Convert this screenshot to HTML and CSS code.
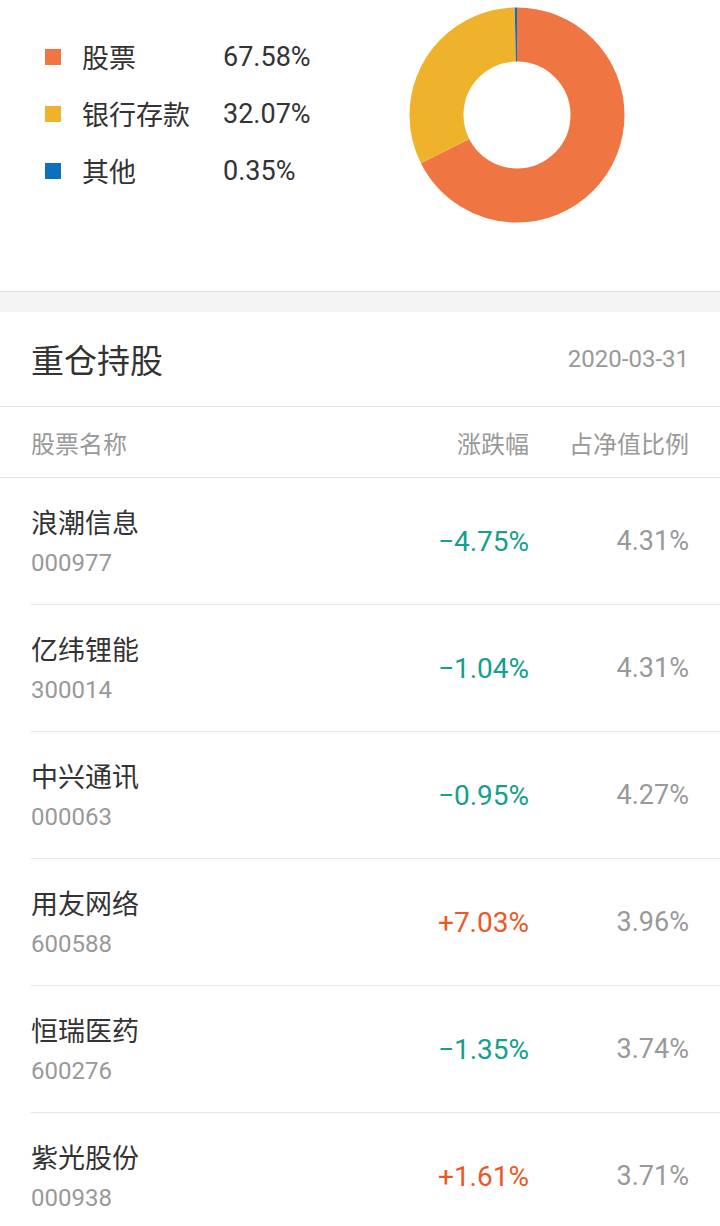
FILE: index.html
```html
<!DOCTYPE html>
<html lang="zh">
<head>
    <meta charset="UTF-8">
    <meta name="viewport" content="width=device-width, initial-scale=1.0">
    <title>基金持仓</title>
    <link rel="stylesheet" href="styles.css">
</head>
<body>
    <div class="asset">
        <div class="legend">
            <div class="legend-row">
                <span class="dot dot-stock"></span>
                <span class="legend-name">股票</span>
                <span class="legend-value">67.58%</span>
            </div>
            <div class="legend-row">
                <span class="dot dot-bank"></span>
                <span class="legend-name">银行存款</span>
                <span class="legend-value">32.07%</span>
            </div>
            <div class="legend-row">
                <span class="dot dot-other"></span>
                <span class="legend-name">其他</span>
                <span class="legend-value">0.35%</span>
            </div>
        </div>
        <svg class="donut" width="216" height="216" viewBox="0 0 216 216">
            <g transform="rotate(-90 108 108)" fill="none" stroke-width="54">
                <circle cx="108" cy="108" r="80.5" pathLength="100" stroke="#ef7543" stroke-dasharray="67.58 32.42" stroke-dashoffset="0"></circle>
                <circle cx="108" cy="108" r="80.5" pathLength="100" stroke="#eeb32b" stroke-dasharray="32.07 67.93" stroke-dashoffset="-67.58"></circle>
                <circle cx="108" cy="108" r="80.5" pathLength="100" stroke="#0c6fc0" stroke-dasharray="0.35 99.65" stroke-dashoffset="-99.65"></circle>
            </g>
        </svg>
    </div>

    <div class="gap"></div>

    <div class="holdings">
        <div class="holdings-head">
            <span class="holdings-title">重仓持股</span>
            <span class="holdings-date">2020-03-31</span>
        </div>
        <div class="table-head">
            <span class="col-name">股票名称</span>
            <span class="col-change">涨跌幅</span>
            <span class="col-ratio">占净值比例</span>
        </div>

        <div class="stock">
            <div class="col-name">
                <div class="stock-name">浪潮信息</div>
                <div class="stock-code">000977</div>
            </div>
            <span class="col-change change down">&minus;4.75%</span>
            <span class="col-ratio ratio">4.31%</span>
        </div>
        <div class="stock">
            <div class="col-name">
                <div class="stock-name">亿纬锂能</div>
                <div class="stock-code">300014</div>
            </div>
            <span class="col-change change down">&minus;1.04%</span>
            <span class="col-ratio ratio">4.31%</span>
        </div>
        <div class="stock">
            <div class="col-name">
                <div class="stock-name">中兴通讯</div>
                <div class="stock-code">000063</div>
            </div>
            <span class="col-change change down">&minus;0.95%</span>
            <span class="col-ratio ratio">4.27%</span>
        </div>
        <div class="stock">
            <div class="col-name">
                <div class="stock-name">用友网络</div>
                <div class="stock-code">600588</div>
            </div>
            <span class="col-change change up">+7.03%</span>
            <span class="col-ratio ratio">3.96%</span>
        </div>
        <div class="stock">
            <div class="col-name">
                <div class="stock-name">恒瑞医药</div>
                <div class="stock-code">600276</div>
            </div>
            <span class="col-change change down">&minus;1.35%</span>
            <span class="col-ratio ratio">3.74%</span>
        </div>
        <div class="stock">
            <div class="col-name">
                <div class="stock-name">紫光股份</div>
                <div class="stock-code">000938</div>
            </div>
            <span class="col-change change up">+1.61%</span>
            <span class="col-ratio ratio">3.71%</span>
        </div>
    </div>
</body>
</html>
```

FILE: styles.css
```css
body {
    margin: 0;
    background: #fff;
    font-family: Roboto, "Noto Sans CJK SC", sans-serif;
    color: #333;
}
.asset {
    display: flex;
    height: 291px;
    padding-left: 45px;
    border-bottom: 1px solid #dedede;
}
.legend {
    width: 364px;
    padding-top: 28px;
}
.legend-row {
    display: flex;
    align-items: center;
    height: 57px;
    font-size: 27px;
}
.dot {
    width: 16px;
    height: 16px;
    margin-right: 21px;
}
.dot-stock { background: #ef7543; }
.dot-bank { background: #eeb32b; }
.dot-other { background: #0c6fc0; }
.legend-name {
    width: 141px;
}
.donut {
    margin-top: 7px;
}
.gap {
    height: 20px;
    background: #f4f4f4;
}
.holdings-head {
    display: flex;
    justify-content: space-between;
    align-items: center;
    height: 94px;
    padding: 0 31px;
    border-bottom: 1px solid #e2e2e2;
}
.holdings-title {
    font-size: 33px;
    color: #333;
}
.holdings-date {
    font-size: 24px;
    color: #999;
}
.table-head {
    display: flex;
    align-items: center;
    height: 70px;
    padding: 0 31px;
    border-bottom: 1px solid #e2e2e2;
    font-size: 24px;
    color: #999;
}
.col-name {
    flex: 1;
}
.col-change {
    width: 150px;
    text-align: right;
}
.col-ratio {
    width: 160px;
    text-align: right;
}
.stock {
    display: flex;
    align-items: center;
    height: 126px;
    margin-left: 31px;
    padding-right: 31px;
    border-bottom: 1px solid #e6e6e6;
}
.stock .col-name {
    padding-top: 6px;
}
.stock-name {
    font-size: 27px;
    color: #333;
    line-height: 38px;
}
.stock-code {
    font-size: 24px;
    color: #999;
    line-height: 40px;
}
.change { font-size: 28px; }
.down { color: #14a08c; }
.up { color: #ee5725; }
.ratio {
    font-size: 27px;
    color: #999;
}
```
